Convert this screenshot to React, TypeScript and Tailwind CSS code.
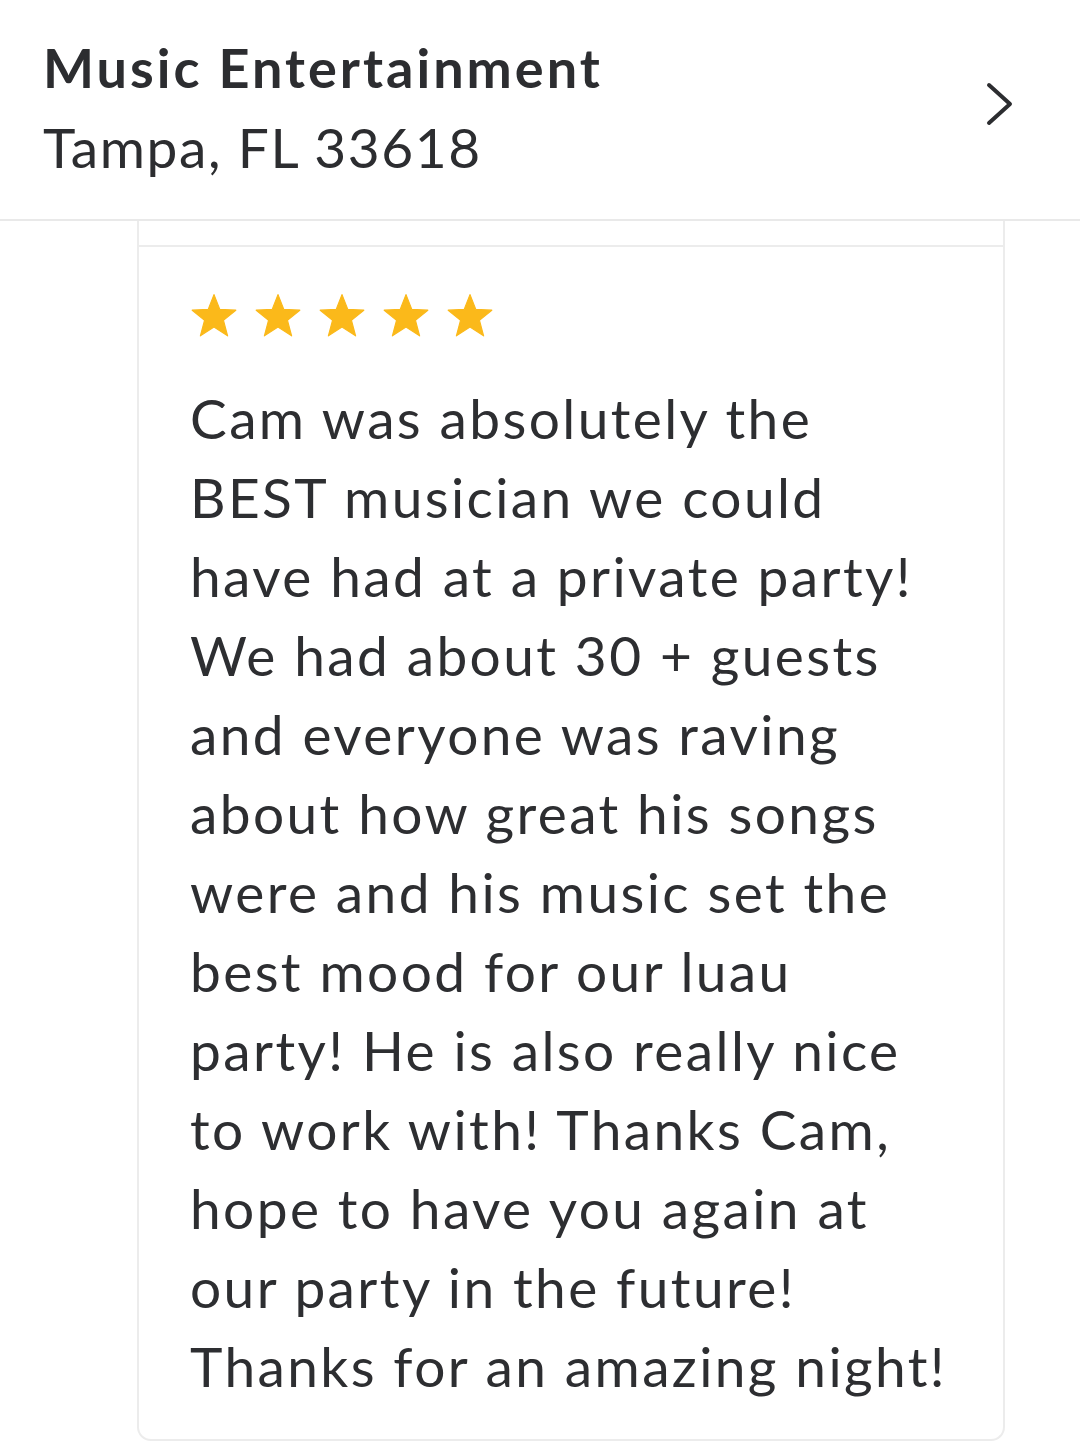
import React from "react";

const Star = () => (
  <svg width="48" height="46" viewBox="0 0 24 23" className="block">
    <path
      d="M12 0.8 L14.9 8.2 L22.9 8.6 L16.7 13.6 L18.8 21.4 L12 17 L5.2 21.4 L7.3 13.6 L1.1 8.6 L9.1 8.2 Z"
      fill="#fbb91a"
      stroke="#fbb91a"
      strokeWidth="0.6"
      strokeLinejoin="round"
    />
  </svg>
);

const lines = [
  "Cam was absolutely the",
  "BEST musician we could",
  "have had at a private party!",
  "We had about 30 + guests",
  "and everyone was raving",
  "about how great his songs",
  "were and his music set the",
  "best mood for our luau",
  "party! He is also really nice",
  "to work with! Thanks Cam,",
  "hope to have you again at",
  "our party in the future!",
  "Thanks for an amazing night!",
];

export default function App() {
  return (
    <div
      className="w-[1080px] h-[1441px] bg-white overflow-hidden flex flex-col"
      style={{ fontFamily: "Lato, 'Open Sans', sans-serif" }}
    >
      <header className="h-[221px] shrink-0 border-b-2 border-[#e9e9e9] flex items-center justify-between pl-[43px] pr-[64px]">
        <div className="flex flex-col pb-[4px]">
          <div className="text-[54px] leading-[78px] font-bold text-[#2c2d30] tracking-[3px]">
            Music Entertainment
          </div>
          <div className="text-[55px] leading-[80px] text-[#2c2d30] tracking-[1.6px]">
            Tampa, FL 33618
          </div>
        </div>
        <svg width="32" height="46" viewBox="0 0 32 46" fill="none" className="mb-[12px]">
          <path d="M5 4 L26 23 L5 42" stroke="#2c2d30" strokeWidth="4" strokeLinecap="round" strokeLinejoin="round" />
        </svg>
      </header>
      <div className="ml-[137px] mr-[75px] flex-1 border-x-2 border-b-2 border-[#ececec] rounded-b-[14px] flex flex-col">
        <div className="h-[26px] border-b-2 border-[#ececec]" />
        <div className="pl-[51px] pt-[46px]">
          <div className="flex gap-[16px]">
            <Star />
            <Star />
            <Star />
            <Star />
            <Star />
          </div>
          <div className="mt-[40px] text-[55px] leading-[79px] text-[#2d2e31] tracking-[2.4px]">
            {lines.map((l, i) => (
              <div key={i} className="whitespace-nowrap">{l}</div>
            ))}
          </div>
        </div>
      </div>
    </div>
  );
}
